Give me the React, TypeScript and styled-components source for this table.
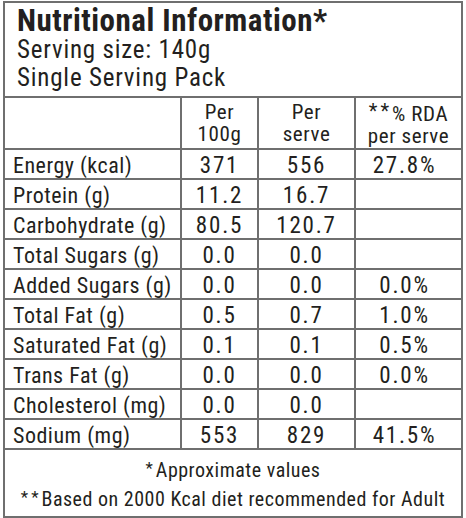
import React from "react";
import styled, { createGlobalStyle } from "styled-components";

const GlobalStyle = createGlobalStyle`
  body {
    margin: 1px 0 0 3px;
    background: #ffffff;
    font-family: "Roboto Condensed", "Liberation Sans", sans-serif;
    color: #231f20;
  }
`;

const LINE = "#6f6f6f";

const Card = styled.section`
  width: 460px;
  box-sizing: border-box;
  border: 2px solid ${LINE};
  background: #fff;
`;

const Header = styled.header`
  padding: 3px 12px 4px;
`;

const Title = styled.h1`
  margin: 0;
  font-size: 31px;
  font-weight: 700;
  line-height: 30px;
  letter-spacing: 0.5px;
`;

const SubLine = styled.div`
  font-size: 25px;
  line-height: 28px;
  letter-spacing: 0.8px;
`;

const Table = styled.table`
  width: 100%;
  border-collapse: collapse;
  table-layout: fixed;
`;

const Cell = styled.td`
  border: 2px solid ${LINE};
  height: 25px;
  padding: 3px 0 0 0;
  font-size: 23px;
  line-height: 25px;
  letter-spacing: 1.8px;
  text-align: center;
  white-space: nowrap;

  &:first-child {
    border-left: none;
    padding-left: 8px;
    font-size: 22px;
    letter-spacing: 0.5px;
    text-align: left;
  }
  &:last-child {
    border-right: none;
    padding-right: 8px;
  }
`;

const HeadCell = styled.th`
  border: 2px solid ${LINE};
  height: 50px;
  padding: 0;
  font-size: 21px;
  font-weight: 400;
  line-height: 22px;
  letter-spacing: 0.6px;
  text-align: center;
  vertical-align: middle;

  &:first-child {
    border-left: none;
  }
  &:last-child {
    border-right: none;
  }
`;

const Stars = styled.span<{ $size?: number }>`
  letter-spacing: 3px;
  font-size: ${(p) => p.$size ?? 17}px;
  vertical-align: 3px;
`;

const Footer = styled.footer`
  padding: 5px 0 3px;
  text-align: center;
  font-size: 20px;
  line-height: 27px;
  letter-spacing: 0.5px;
`;

type Row = { name: string; per100: string; serve: string; rda: string };

const rows: Row[] = [
  { name: "Energy (kcal)", per100: "371", serve: "556", rda: "27.8%" },
  { name: "Protein (g)", per100: "11.2", serve: "16.7", rda: "" },
  { name: "Carbohydrate (g)", per100: "80.5", serve: "120.7", rda: "" },
  { name: "Total Sugars (g)", per100: "0.0", serve: "0.0", rda: "" },
  { name: "Added Sugars (g)", per100: "0.0", serve: "0.0", rda: "0.0%" },
  { name: "Total Fat (g)", per100: "0.5", serve: "0.7", rda: "1.0%" },
  { name: "Saturated Fat (g)", per100: "0.1", serve: "0.1", rda: "0.5%" },
  { name: "Trans Fat (g)", per100: "0.0", serve: "0.0", rda: "0.0%" },
  { name: "Cholesterol (mg)", per100: "0.0", serve: "0.0", rda: "" },
  { name: "Sodium (mg)", per100: "553", serve: "829", rda: "41.5%" },
];

export default function App() {
  return (
    <>
      <GlobalStyle />
      <Card>
        <Header>
          <Title>Nutritional Information*</Title>
          <SubLine>Serving size: 140g</SubLine>
          <SubLine>Single Serving Pack</SubLine>
        </Header>

        <Table>
          <colgroup>
            <col style={{ width: 176 }} />
            <col style={{ width: 77 }} />
            <col style={{ width: 97 }} />
            <col />
          </colgroup>
          <thead>
            <tr>
              <HeadCell />
              <HeadCell>
                Per
                <br />
                100g
              </HeadCell>
              <HeadCell>
                Per
                <br />
                serve
              </HeadCell>
              <HeadCell>
                <Stars $size={20}>**</Stars>% RDA
                <br />
                per serve
              </HeadCell>
            </tr>
          </thead>
          <tbody>
            {rows.map((r) => (
              <tr key={r.name}>
                <Cell>{r.name}</Cell>
                <Cell>{r.per100}</Cell>
                <Cell>{r.serve}</Cell>
                <Cell>{r.rda}</Cell>
              </tr>
            ))}
          </tbody>
        </Table>

        <Footer>
          <div>
            <Stars>*</Stars>Approximate values
          </div>
          <div>
            <Stars>**</Stars>Based on 2000 Kcal diet recommended for Adult
          </div>
        </Footer>
      </Card>
    </>
  );
}
